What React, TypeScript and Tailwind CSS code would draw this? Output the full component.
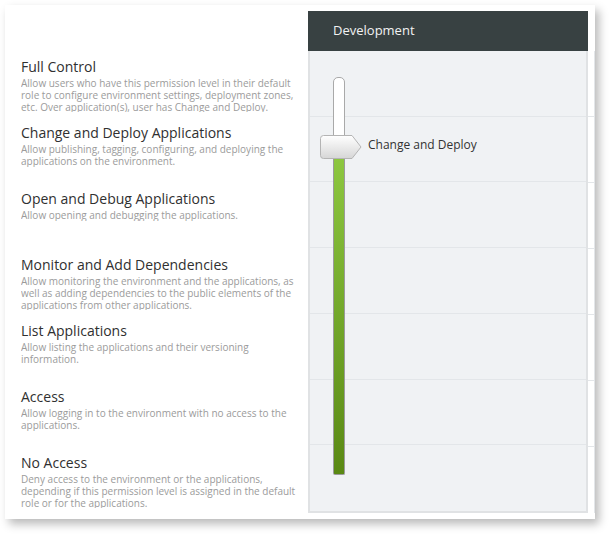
import React from "react";

const items = [
  {
    t: "Full Control",
    d: "Allow users who have this permission level in their default role to configure environment settings, deployment zones, etc. Over application(s), user has Change and Deploy.",
  },
  {
    t: "Change and Deploy Applications",
    d: "Allow publishing, tagging, configuring, and deploying the applications on the environment.",
  },
  { t: "Open and Debug Applications", d: "Allow opening and debugging the applications." },
  {
    t: "Monitor and Add Dependencies",
    d: "Allow monitoring the environment and the applications, as well as adding dependencies to the public elements of the applications from other applications.",
  },
  { t: "List Applications", d: "Allow listing the applications and their versioning information." },
  { t: "Access", d: "Allow logging in to the environment with no access to the applications." },
  {
    t: "No Access",
    d: "Deny access to the environment or the applications, depending if this permission level is assigned in the default role or for the applications.",
  },
];

function Thumb() {
  return (
    <svg width="42" height="24" viewBox="0 0 42 24" className="block">
      <defs>
        <linearGradient id="tg" x1="0" y1="0" x2="0" y2="1">
          <stop offset="0" stopColor="#ffffff" />
          <stop offset="1" stopColor="#d6d6d6" />
        </linearGradient>
      </defs>
      <path
        d="M3.5 0.5 H32 L41 12 L32 23.5 H3.5 Q0.5 23.5 0.5 20.5 V3.5 Q0.5 0.5 3.5 0.5 Z"
        fill="url(#tg)"
        stroke="#b4b4b4"
        strokeWidth="1"
      />
    </svg>
  );
}

export default function App() {
  return (
    <div className="w-[610px] h-[535px] bg-white p-[5px]" style={{ fontFamily: '"Open Sans", "Noto Sans", sans-serif' }}>
      <div className="w-[590px] h-[514px] bg-white shadow-[4px_5px_9px_rgba(0,0,0,0.28)] flex pt-[6px]">
        {/* left column */}
        <div className="w-[303px] pl-4 pt-[40px]">
          {items.map((it) => (
            <div key={it.t} className="h-[66px] pt-[6px]">
              <div className="text-[14px] leading-[19px] text-[#303030]">{it.t}</div>
              <div className="mt-[1px] w-[280px] max-h-[35px] overflow-hidden text-[10px] leading-[12px] text-[#9b9b9b]">
                {it.d}
              </div>
            </div>
          ))}
        </div>
        {/* panel */}
        <div className="w-[280px] flex flex-col">
          <div className="h-[40px] bg-[#384142] flex items-center pl-[25px] text-[13px] text-[#f2f2f2]">
            Development
          </div>
          <div className="relative h-[462px] bg-[#f0f2f4] border-l-2 border-r-2 border-b-2 border-[#e0e2e4] flex flex-col">
            {items.map((it, i) => (
              <div key={it.t} className={"h-[66px] " + (i < 6 ? "border-b border-[#e3e6e9]" : "")} />
            ))}
            {/* track white part */}
            <div className="absolute left-[23px] top-[26px] w-[12px] h-[64px] bg-white border border-[#a9a9a9] rounded-t-[5px]" />
            {/* green fill */}
            <div className="absolute left-[23px] top-[106px] w-[12px] h-[318px] border border-[#9a9a9a] border-t-0 rounded-b-[2px] bg-gradient-to-b from-[#8dc73f] to-[#5a8913]" />
            {/* thumb */}
            <div className="absolute left-[10px] top-[84px]">
              <Thumb />
            </div>
            <div className="absolute left-[58px] top-[84px] text-[12px] leading-[20px] text-[#333333]">
              Change and Deploy
            </div>
          </div>
        </div>
        {/* cut-off next column */}
        <div className="w-[7px] flex flex-col pt-[40px]">
          {items.map((it, i) => (
            <div key={it.t} className={"h-[66px] border-r border-[#e3e6e9] " + (i < 6 ? "border-b border-b-[#e3e6e9]" : "")} />
          ))}
        </div>
      </div>
    </div>
  );
}
